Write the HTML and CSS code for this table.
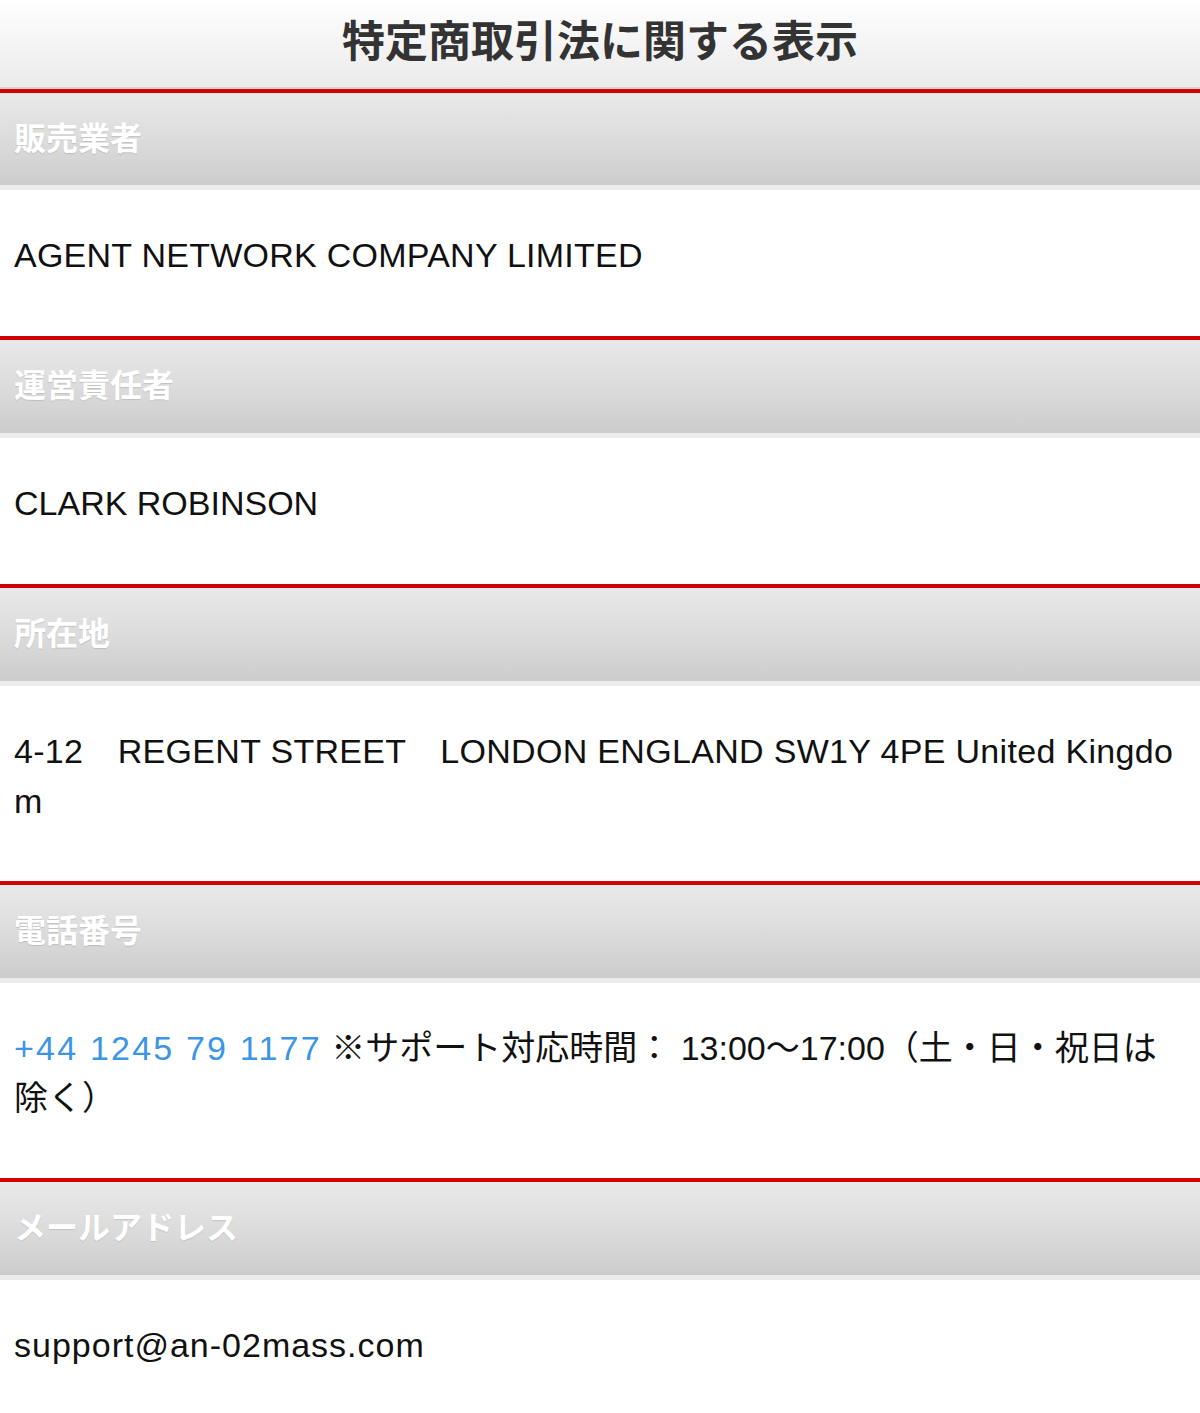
FILE: index.html
```html
<!DOCTYPE html>
<html lang="ja">
<head>
<meta charset="utf-8">
<title>特定商取引法に関する表示</title>
<link rel="stylesheet" href="styles.css">
</head>
<body>
<header class="title">特定商取引法に関する表示</header>
<section class="item">
  <h2 class="label">販売業者</h2>
  <div class="value company">AGENT NETWORK COMPANY LIMITED</div>
</section>
<section class="item">
  <h2 class="label">運営責任者</h2>
  <div class="value">CLARK ROBINSON</div>
</section>
<section class="item">
  <h2 class="label">所在地</h2>
  <div class="value address">4-12　REGENT STREET　LONDON ENGLAND SW1Y 4PE United Kingdom</div>
</section>
<section class="item">
  <h2 class="label">電話番号</h2>
  <div class="value phone"><a class="tel" href="#">+44 1245 79 1177</a> ※サポート対応時間： 13:00〜17:00（土・日・祝日は除く）</div>
</section>
<section class="item">
  <h2 class="label">メールアドレス</h2>
  <div class="value email">support@an-02mass.com</div>
</section>
</body>
</html>
```

FILE: styles.css
```css
html, body {
  margin: 0;
  padding: 0;
  background: #ffffff;
}
body {
  font-family: "Liberation Sans", "Noto Sans CJK JP", sans-serif;
  color: #111111;
}
.title {
  height: 87px;
  line-height: 77px;
  text-align: center;
  font-family: "Noto Sans CJK JP", sans-serif;
  font-weight: 700;
  font-size: 43px;
  color: #333333;
  background: linear-gradient(to bottom, #ffffff 0%, #f4f4f4 50%, #ebebeb 100%);
  border-bottom: 2px solid #d2d2d2;
}
.item {
  border-top: 4px solid #d40000;
  box-shadow: inset 0 1px 0 #e25555;
}
.item:first-of-type {
  box-shadow: none;
}
.label {
  margin: 0;
  height: 93px;
  line-height: 87px;
  padding: 0 14px;
  font-family: "Noto Sans CJK JP", sans-serif;
  font-weight: 700;
  font-size: 32px;
  color: #ffffff;
  text-shadow: 0 1px 1px rgba(0, 0, 0, 0.12);
  background: linear-gradient(to bottom, #e9e9e9 0%, #dcdcdc 50%, #cccccc 100%);
  border-bottom: 5px solid #ececec;
}
.item:first-of-type .label {
  height: 92px;
  line-height: 86px;
}
.value {
  padding: 40px 14px 56px;
  font-size: 34px;
  line-height: 50px;
  background: #ffffff;
}
.company {
  letter-spacing: 0.25px;
}
.address {
  word-break: break-all;
  letter-spacing: 0.32px;
  padding-bottom: 55px;
}
.phone {
  padding-bottom: 55px;
}
.email {
  letter-spacing: 1px;
}
.tel {
  color: #3d95e6;
  text-decoration: none;
  letter-spacing: 2.2px;
}
```
